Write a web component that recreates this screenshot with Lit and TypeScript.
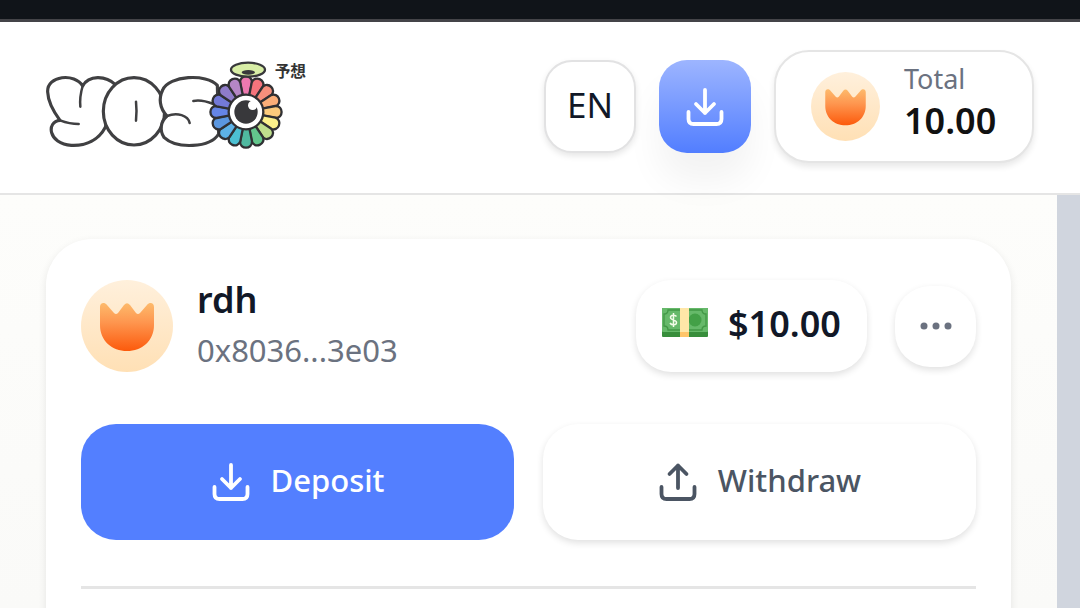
import { LitElement, html, svg, css } from "lit";
import { customElement, property } from "lit/decorators.js";

const PETALS = [
  "#ee79b0", "#f5747c", "#f78f7c", "#fbae78", "#fccb7c", "#fbf08b", "#bfdf8d", "#63c68c",
  "#4fb9a0", "#4cc0d2", "#5db2e6", "#5b97e0", "#6585e6", "#7379d8", "#8f7cc9", "#b586c6",
];

@customElement("yoso-logo")
export class YosoLogo extends LitElement {
  static styles = css`
    :host { display: block; padding-bottom: 4px; }
    svg { display: block; width: 262px; height: 90px; }
    .kanji { font: 700 47px "Noto Sans CJK JP", sans-serif; fill: #333; }
  `;

  render() {
    return html`
      <svg viewBox="48 30 786 270" role="img" aria-label="YOSO">
        <g fill="#fff" stroke="#404042" stroke-width="9.5" stroke-linecap="round" stroke-linejoin="round">
          <path d="M90 211C70 184 54 152 53 126C50 76 135 68 158 108C176 74 228 76 256 104L226 232C206 270 168 288 124 286C54 282 48 214 90 211Z" />
          <path stroke-width="7.5" fill="none" d="M158 108C152 128 149 148 151 170M90 211C106 217 126 222 146 222" />
          <ellipse cx="312" cy="184" rx="92" ry="101" />
          <path d="M398 120C416 76 530 70 562 106L566 252C540 294 440 298 402 262C388 240 392 214 411 198C388 174 386 144 398 120Z" />
          <path stroke-width="7.5" fill="none" d="M318 155C320 174 320 194 318 212M411 198C442 186 474 196 479 219M490 153C510 149 530 154 550 162" />
        </g>
        <g transform="translate(648 186)" stroke="#303033" stroke-width="7" stroke-linejoin="round">
          ${PETALS.map(
            (fill, i) => svg`<path fill=${fill} transform="rotate(${i * 22.5})" d="M-10-48L-18-88C-19-113 19-113 18-88L10-48Z" />`,
          )}
          <circle r="52" fill="#fff" />
          <circle r="35" fill="#38383b" stroke="none" />
          <circle cx="20" cy="-20" r="14" fill="#fff" stroke="none" />
        </g>
        <ellipse cx="654" cy="59" rx="51" ry="21" fill="#d8eea6" stroke="#38383b" stroke-width="7" />
        <ellipse cx="655" cy="67" rx="20" ry="7" fill="#38383b" />
        <text class="kanji" x="734" y="81">予想</text>
      </svg>
    `;
  }
}

@customElement("tulip-avatar")
export class TulipAvatar extends LitElement {
  static styles = css`
    :host { display: block; flex: none; }
    svg { display: block; width: 100%; height: 100%; }
  `;

  render() {
    return html`
      <svg viewBox="0 0 92 92" aria-hidden="true">
        <defs>
          <linearGradient id="disc" x1="0" y1="0" x2="0" y2="1">
            <stop stop-color="#fff0dc" /><stop offset="1" stop-color="#ffe0b5" />
          </linearGradient>
          <linearGradient id="cup" x1="0" y1="0" x2="0" y2="1">
            <stop stop-color="#fdba6c" /><stop offset=".4" stop-color="#fe964f" /><stop offset="1" stop-color="#fc5a0c" />
          </linearGradient>
        </defs>
        <circle cx="46" cy="46" r="46" fill="url(#disc)" />
        <path fill="url(#cup)" d="M19 27C19 23 23 21.500 26 25L33 33Q35 35 37 33L43 25Q46 21.500 49 25L55 33Q57 35 59 33L66 25C69 21.500 73 23 73 27V45C73 61 61 71 46 71C31 71 19 61 19 45Z" />
      </svg>
    `;
  }
}

@customElement("tray-icon")
export class TrayIcon extends LitElement {
  @property() direction: "in" | "out" = "in";

  static styles = css`
    :host { display: block; flex: none; width: 40px; height: 40px; }
    svg { display: block; }
  `;

  render() {
    return html`
      <svg viewBox="0 0 40 40" width="40" height="40" fill="none" stroke="currentColor"
        stroke-width="3.8" stroke-linecap="round" stroke-linejoin="round" aria-hidden="true">
        ${this.direction === "in"
          ? svg`<path d="M20 3V26M11 17L20 26L29 17" />`
          : svg`<path d="M20 26V3.500M11.500 12L20 3.500L28.500 12" />`}
        <path d="M3.500 25V32Q3.500 37 8.500 37H31.500Q36.500 37 36.500 32V25" />
      </svg>
    `;
  }
}

@customElement("app-root")
export class AppRoot extends LitElement {
  static styles = css`
    :host {
      display: flex;
      flex-direction: column;
      height: 100vh;
      overflow: hidden;
      font-family: "Noto Sans", sans-serif;
      color: #111827;
      background: #fcfcfa;
    }
    * { box-sizing: border-box; }
    button { font: inherit; color: inherit; border: 0; padding: 0; background: #fff; cursor: pointer; }
    p, h1 { margin: 0; }
    .strip { flex: none; height: 22px; background: #101419; border-bottom: 3px solid #444448; }
    .header {
      flex: none;
      display: flex;
      align-items: center;
      justify-content: space-between;
      padding: 28px 46px 30px;
      background: #fff;
      border-bottom: 2px solid #e5e5e5;
    }
    .tools { display: flex; align-items: center; gap: 23px; }
    .square {
      display: grid;
      place-items: center;
      width: 92px;
      height: 93px;
      border-radius: 28px;
    }
    .lang {
      padding-bottom: 4px;
      font-size: 35px;
      line-height: 44px;
      border: 2px solid #e2e2e3;
      box-shadow: 0 3px 6px rgb(0 0 0 / 0.1);
    }
    .receive {
      position: relative;
      color: #fff;
      background: linear-gradient(#9db5ff, #527eff);
      box-shadow: 0 28px 36px rgb(0 0 0 / 0.05);
    }
    .total {
      display: flex;
      align-items: center;
      gap: 24px;
      min-width: 260px;
      height: 113px;
      padding: 0 35px;
      text-align: left;
      border: 2px solid #e5e5e5;
      border-radius: 35px;
      box-shadow: 0 4px 6px rgb(0 0 0 / 0.09);
    }
    .total-avatar { width: 69px; height: 69px; }
    .total-text { display: flex; flex-direction: column; padding-bottom: 12px; }
    .total-label { font-size: 27px; line-height: 40px; color: #6b7280; }
    .total-value { font-size: 36px; line-height: 44px; font-weight: 600; color: #111; }
    .body { flex: 1; min-height: 0; display: flex; }
    .main { flex: 1; min-width: 0; padding: 44px 46px 0; background: linear-gradient(#fdfdfb, #fafaf8); }
    .scrollbar { width: 23px; background: #d0d5de; }
    .card {
      height: 100vh;
      padding: 41px 35px;
      background: #fff;
      border-radius: 46px;
      box-shadow: 0 3px 8px rgb(0 0 0 / 0.09);
    }
    .profile { display: flex; align-items: center; gap: 24px; }
    .avatar { width: 92px; height: 92px; }
    .who { flex: 1; min-width: 0; display: flex; flex-direction: column; gap: 8px; }
    .name { font-size: 36px; line-height: 40px; font-weight: 600; }
    .address { font-size: 31px; line-height: 44px; color: #6b7280; }
    .actions { display: flex; align-items: center; gap: 28px; }
    .raised { box-shadow: 0 3px 7px rgb(0 0 0 / 0.12); }
    .balance {
      display: flex;
      align-items: center;
      gap: 20px;
      height: 92px;
      min-width: 231px;
      padding: 0 24px 0 26px;
      border-radius: 35px;
      font-size: 36px;
      line-height: 44px;
      font-weight: 600;
    }
    .amount { padding-bottom: 4px; }
    .bill { flex: none; width: 46px; height: 30px; margin-bottom: 8px; }
    .more { display: grid; place-items: center; width: 81px; height: 81px; border-radius: 35px; color: #6b7280; }
    .transfer { display: grid; grid-template-columns: 1fr 1fr; gap: 29px; margin-top: 52px; }
    .action {
      display: flex;
      align-items: center;
      justify-content: center;
      gap: 20px;
      height: 116px;
      border-radius: 35px;
      font-size: 31px;
      line-height: 40px;
      font-weight: 500;
      color: #4b5563;
    }
    .deposit { color: #fff; background: #537fff; }
    .action-label { padding-bottom: 4px; }
    .divider { height: 3px; margin: 46px 0 0; border: 0; background: #e5e5e5; }
  `;

  render() {
    return html`
      <div class="strip"></div>
      <header class="header">
        <yoso-logo></yoso-logo>
        <div class="tools">
          <button class="square lang" aria-label="Language">EN</button>
          <button class="square receive" aria-label="Receive"><tray-icon></tray-icon></button>
          <button class="total">
            <tulip-avatar class="total-avatar"></tulip-avatar>
            <span class="total-text">
              <span class="total-label">Total</span>
              <span class="total-value">10.00</span>
            </span>
          </button>
        </div>
      </header>
      <div class="body">
        <main class="main">
          <section class="card">
            <div class="profile">
              <tulip-avatar class="avatar"></tulip-avatar>
              <div class="who">
                <h1 class="name">rdh</h1>
                <p class="address">0x8036...3e03</p>
              </div>
              <div class="actions">
                <button class="balance raised">
                  <svg class="bill" viewBox="0 0 46 30" aria-hidden="true">
                    <rect y="1" width="46" height="29" rx="1" fill="#388e3c" />
                    <rect y="1" width="46" height="24" rx="1" fill="#66b96a" />
                    <path d="M6 3H40Q40 7 44 7V19Q40 19 40 23H6Q6 19 2 19V7Q6 7 6 3Z" fill="none" stroke="#429846" stroke-width="1.300" />
                    <circle cx="33" cy="13" r="6.500" fill="#43a047" />
                    <path d="M14.500 9.500C13 7.500 8.500 8 8.500 10.500C8.500 13.500 14.500 12.500 14.500 15.500C14.500 18.500 9.500 18.500 8 16M11.500 6V20" fill="none" stroke="#f2fbe8" stroke-width="1.500" />
                    <rect x="18" y="1" width="9" height="25" fill="#ffe7a8" />
                    <rect x="18" y="25" width="9" height="5" fill="#ffc56a" />
                  </svg>
                  <span class="amount">$10.00</span>
                </button>
                <button class="more raised" aria-label="More">
                  <svg width="32" height="8" viewBox="0 0 32 8" fill="currentColor" aria-hidden="true">
                    <circle cx="4" cy="4" r="3.500" /><circle cx="16" cy="4" r="3.500" /><circle cx="28" cy="4" r="3.500" />
                  </svg>
                </button>
              </div>
            </div>
            <div class="transfer">
              <button class="action deposit"><tray-icon></tray-icon><span class="action-label">Deposit</span></button>
              <button class="action raised"><tray-icon direction="out"></tray-icon><span class="action-label">Withdraw</span></button>
            </div>
            <hr class="divider" />
          </section>
        </main>
        <div class="scrollbar"></div>
      </div>
    `;
  }
}
